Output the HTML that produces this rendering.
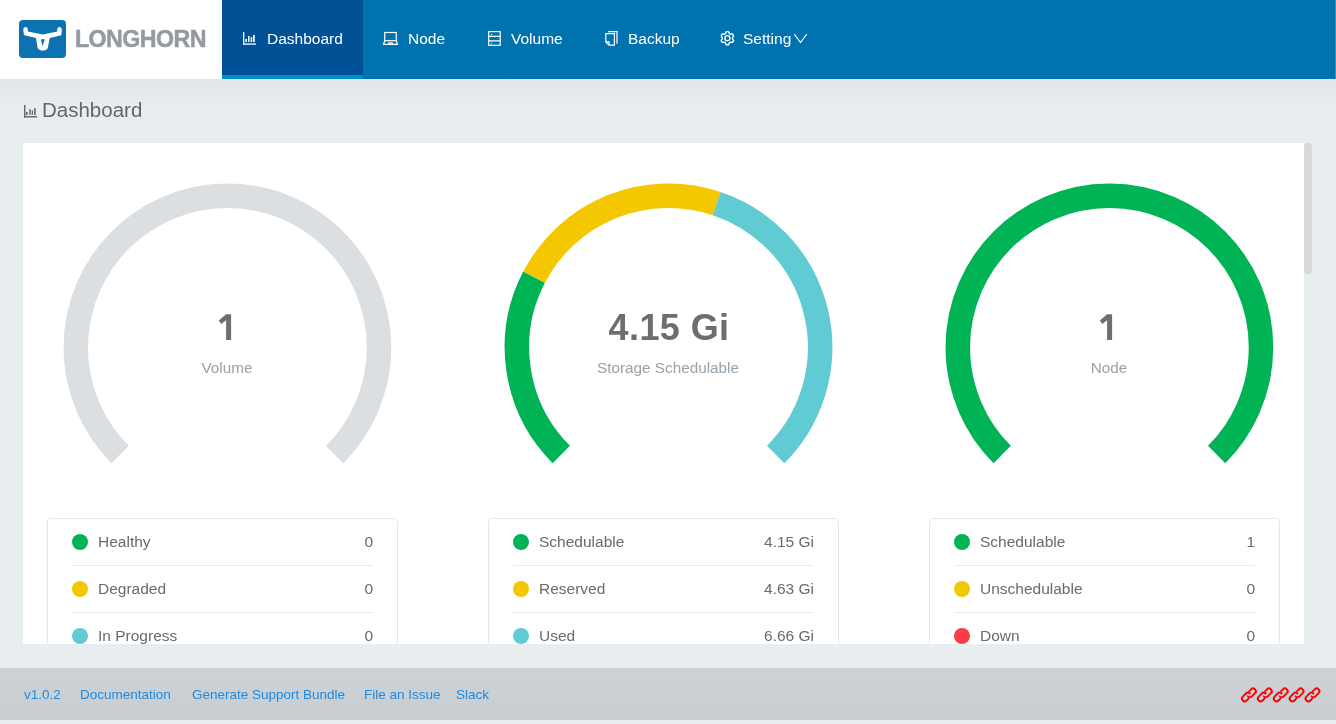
<!DOCTYPE html>
<html><head><meta charset="utf-8">
<style>
*{margin:0;padding:0;box-sizing:border-box}
html,body{width:1336px;height:724px;overflow:hidden;background:#e8edf0;font-family:"Liberation Sans",sans-serif}
.abs{will-change:transform}
.abs{position:absolute}
#hdr{left:0;top:0;width:1336px;height:79px;background:#0073ae}
#logoarea{left:0;top:0;width:222px;height:79px;background:#fff}
#active{left:222px;top:0;width:141px;height:79px;background:#005195;border-bottom:4px solid #0090c4}
.nav{color:#fff;font-size:15.5px;line-height:20px;white-space:nowrap}
.navicon{stroke:#fff;fill:none}
#logotext{left:75px;top:26px;font-size:23.2px;font-weight:700;color:#939ba2;line-height:26px;white-space:nowrap;letter-spacing:-0.55px;-webkit-text-stroke:0.5px #939ba2}
#shadow{left:0;top:79px;width:1336px;height:30px;background:linear-gradient(#e1e6e9,#e8edf0)}
#title{left:42px;top:98px;font-size:20.5px;color:#666;line-height:24px;white-space:nowrap}
#card{left:23px;top:143px;width:1281px;height:501px;background:#fff;overflow:hidden}
#thumb{left:1304px;top:143px;width:8px;height:131px;background:#d9d9d9;border-radius:4px}
.big{font-size:36px;font-weight:700;color:#6e6e6e;letter-spacing:0.4px;line-height:40px;text-align:center;width:300px;white-space:nowrap}
.lbl{font-size:15.3px;color:#98a2aa;line-height:18px;text-align:center;width:300px;white-space:nowrap}
.legend{width:351px;height:200px;border:1px solid #e6e7eb;border-radius:4px;background:#fff}
.row{position:absolute;left:24px;width:301px;height:47px}
.row .dot{position:absolute;left:0;top:15px;width:16px;height:16px;border-radius:50%}
.row .t{position:absolute;left:26px;top:14px;font-size:15.5px;line-height:18px;color:#6a6a6a;white-space:nowrap}
.row .v{position:absolute;right:0;top:14px;font-size:15.5px;line-height:18px;color:#6a6a6a;white-space:nowrap}
.row.sep{border-bottom:1px solid #e9e9ee}
#footer{left:0;top:668px;width:1336px;height:52px;background:linear-gradient(#cdd2d6,#c8cdd1)}
#fstrip{left:0;top:720px;width:1336px;height:4px;background:#e8edf0}
.flink{top:687px;font-size:13.5px;line-height:16px;color:#1d8be2;white-space:nowrap}
</style></head><body>
<div id="hdr" class="abs"></div>
<div id="logoarea" class="abs"></div>
<svg class="abs" style="left:0;top:0" width="222" height="79" viewBox="0 0 222 79">
  <rect x="19" y="20" width="47" height="38" rx="4" fill="#0d72b2"/>
  <path fill="#fff" d="M25.7 27 C24 27 23.2 28.6 23.3 30 L23.9 34.6 L24.4 35.2 L36 38 L37.6 47.7 C38.2 49.6 40.4 50.5 42.7 50.5 C45 50.5 47.3 49.6 47.9 47.7 L49.7 38 L61.3 35.2 L61.9 30 C61.9 28.4 60.9 27 59.4 27 C57.9 27 57.1 28.4 57.3 30 L57.3 31.6 L42.7 34.6 L27.8 31.6 L27.8 30 C27.9 28.4 27.2 27 25.7 27 Z M40.9 39.2 L44.9 39.2 L42.4 46.2 Z" fill-rule="evenodd"/>
</svg>
<div id="logotext" class="abs">LONGHORN</div>
<div id="active" class="abs"></div>
<div class="abs" style="left:1335px;top:0;width:1px;height:79px;background:rgba(255,255,255,0.22)"></div>
<!-- nav icons -->
<svg class="abs" style="left:0;top:0" width="840" height="79" viewBox="0 0 840 79">
  <g fill="#fff">
    <rect x="243" y="32" width="1.3" height="12.7"/>
    <rect x="243" y="43.4" width="13" height="1.3"/>
    <rect x="245.3" y="39" width="1.6" height="3"/>
    <rect x="248" y="36" width="1.5" height="6"/>
    <rect x="250.7" y="37.1" width="1.5" height="4.9"/>
    <rect x="253.1" y="35" width="1.7" height="7"/>
  </g>
  <g class="navicon" stroke-width="1.2">
    <rect x="384.7" y="32.5" width="11.6" height="8.2"/>
    <path d="M384.7 40.7 L383.6 44.3 L397.4 44.3 L396.3 40.7"/>
    <path d="M388.4 44.3 L389 42.9 L392 42.9 L392.6 44.3"/>
    <rect x="488.7" y="31.6" width="11.5" height="13.7"/>
    <path d="M488.7 36.4 H500.2 M488.7 40.8 H500.2"/>
  </g>
  <g fill="#fff"><circle cx="491.5" cy="34.4" r="0.6"/><circle cx="491.5" cy="43.1" r="0.6"/></g>
  <g class="navicon" stroke-width="1.2">
    <path d="M608 31.6 H617 V43.8"/>
    <path d="M605.8 33.6 H614.4 V45.1 H609 L605.8 41.9 Z"/>
    <path d="M605.8 41.9 H609 V45.1"/>
  </g>
  <path class="navicon" stroke-width="1.4" stroke-linejoin="round" d="M725.29 33.67 L726.35 31.58 L728.45 31.58 L729.51 33.67 L730.27 34.10 L732.61 33.98 L733.65 35.80 L732.38 37.76 L732.38 38.64 L733.65 40.60 L732.61 42.42 L730.27 42.30 L729.51 42.73 L728.45 44.82 L726.35 44.82 L725.29 42.73 L724.53 42.30 L722.19 42.42 L721.15 40.60 L722.42 38.64 L722.42 37.76 L721.15 35.80 L722.19 33.98 L724.53 34.10 Z"/>
  <circle class="navicon" stroke-width="1.3" cx="727.4" cy="38.2" r="2.5"/>
  <path class="navicon" stroke-width="1.1" d="M794.3 34.2 L800.5 42.6 L806.7 34.2"/>
</svg>
<div class="abs nav" style="left:267px;top:29px">Dashboard</div>
<div class="abs nav" style="left:408px;top:29px">Node</div>
<div class="abs nav" style="left:511px;top:29px">Volume</div>
<div class="abs nav" style="left:628px;top:29px">Backup</div>
<div class="abs nav" style="left:743px;top:29px">Setting</div>

<div id="shadow" class="abs"></div>
<svg class="abs" style="left:0;top:0" width="60" height="130" viewBox="0 0 60 130">
  <g fill="#6a6a6a">
    <rect x="24" y="105" width="1.5" height="12.5"/>
    <rect x="24" y="116" width="13" height="1.5"/>
    <rect x="26" y="112" width="1.7" height="2.9"/>
    <rect x="29.2" y="109.2" width="1.5" height="5.7"/>
    <rect x="31.7" y="110.3" width="1.3" height="4.6"/>
    <rect x="34" y="108.2" width="1.7" height="6.7"/>
  </g>
</svg>
<div id="title" class="abs">Dashboard</div>

<div id="card" class="abs">
  <svg class="abs" style="left:-23px;top:-143px" width="1336" height="724" viewBox="0 0 1336 724">
    <g fill="none" stroke-width="24.5">
      <path stroke="#dcdfe2" d="M120.20 454.50 A151.6 151.6 0 1 1 334.60 454.50"/>
      <path stroke="#00b456" d="M561.30 454.50 A151.6 151.6 0 0 1 534.12 277.13"/>
      <path stroke="#f5c700" d="M534.12 277.13 A151.6 151.6 0 0 1 716.69 203.56"/>
      <path stroke="#60cbd3" d="M716.69 203.56 A151.6 151.6 0 0 1 775.70 454.50"/>
      <path stroke="#00b456" d="M1002.20 454.50 A151.6 151.6 0 1 1 1216.60 454.50"/>
    </g>
    <path fill="#6e6e6e" d="M226.1 314.2 H231.1 V339.9 H226.1 V320.3 L221.4 323.9 L218.8 320.5 Z"/>
    <path fill="#6e6e6e" d="M1107.1 314.2 H1112.1 V339.9 H1107.1 V320.3 L1102.4 323.9 L1099.8 320.5 Z"/>
  </svg>
  <div class="abs lbl" style="left:54px;top:216px">Volume</div>
  <div class="abs big" style="left:496px;top:165px">4.15 Gi</div>
  <div class="abs lbl" style="left:495px;top:216px">Storage Schedulable</div>
  <div class="abs lbl" style="left:936px;top:216px">Node</div>

  <div class="abs legend" style="left:24px;top:375px">
    <div class="row sep" style="top:0"><span class="dot" style="background:#00b456"></span><span class="t">Healthy</span><span class="v">0</span></div>
    <div class="row sep" style="top:47px"><span class="dot" style="background:#f5c700"></span><span class="t">Degraded</span><span class="v">0</span></div>
    <div class="row" style="top:94px"><span class="dot" style="background:#60cbd3"></span><span class="t">In Progress</span><span class="v">0</span></div>
  </div>
  <div class="abs legend" style="left:465px;top:375px">
    <div class="row sep" style="top:0"><span class="dot" style="background:#00b456"></span><span class="t">Schedulable</span><span class="v">4.15 Gi</span></div>
    <div class="row sep" style="top:47px"><span class="dot" style="background:#f5c700"></span><span class="t">Reserved</span><span class="v">4.63 Gi</span></div>
    <div class="row" style="top:94px"><span class="dot" style="background:#60cbd3"></span><span class="t">Used</span><span class="v">6.66 Gi</span></div>
  </div>
  <div class="abs legend" style="left:906px;top:375px">
    <div class="row sep" style="top:0"><span class="dot" style="background:#00b456"></span><span class="t">Schedulable</span><span class="v">1</span></div>
    <div class="row sep" style="top:47px"><span class="dot" style="background:#f5c700"></span><span class="t">Unschedulable</span><span class="v">0</span></div>
    <div class="row" style="top:94px"><span class="dot" style="background:#f73d48"></span><span class="t">Down</span><span class="v">0</span></div>
  </div>
</div>
<div id="thumb" class="abs"></div>

<div id="footer" class="abs"></div>
<div id="fstrip" class="abs"></div>
<div class="abs flink" style="left:24px">v1.0.2</div>
<div class="abs flink" style="left:80px">Documentation</div>
<div class="abs flink" style="left:192px">Generate Support Bundle</div>
<div class="abs flink" style="left:364px">File an Issue</div>
<div class="abs flink" style="left:456px">Slack</div>
<svg class="abs" style="left:1236px;top:682px" width="90" height="26" viewBox="0 0 90 26">
  <defs>
    <g id="chain" fill="none" stroke="#f00" stroke-width="1.9" stroke-linecap="round" transform="rotate(-45)">
      <path d="M3.0 -2.40 L5.5 -2.40 A2.75 2.75 0 0 1 5.5 3.10 L1.1 3.10 A2.75 2.75 0 0 1 -1.65 0.35"/>
      <path d="M-3.0 2.40 L-5.5 2.40 A2.75 2.75 0 0 1 -5.5 -3.10 L-1.1 -3.10 A2.75 2.75 0 0 1 1.65 -0.35"/>
    </g>
  </defs>
  <use href="#chain" x="12.9" y="12.9"/>
  <use href="#chain" x="28.8" y="12.9"/>
  <use href="#chain" x="44.7" y="12.9"/>
  <use href="#chain" x="60.6" y="12.9"/>
  <use href="#chain" x="76.5" y="12.9"/>
</svg>
</body></html>
